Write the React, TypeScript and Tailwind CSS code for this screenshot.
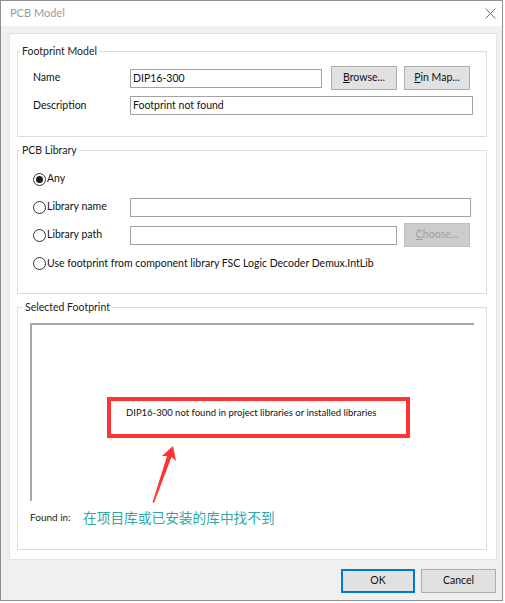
import React from "react";

const font = "font-['Lato','Noto_Sans','Liberation_Sans',sans-serif]";

const Radio = ({ checked }: { checked?: boolean }) => (
  <span className="w-[13px] h-[13px] rounded-full border border-[#333] bg-white flex items-center justify-center shrink-0">
    {checked && <span className="w-[7px] h-[7px] rounded-full bg-[#1a1a1a]" />}
  </span>
);

const Input = ({ value, className }: { value?: string; className: string }) => (
  <div
    className={
      "h-[19px] border border-[#a3a3a3] bg-white px-[2px] text-[10.5px] leading-[17px] text-[#111] " +
      className
    }
  >
    {value}
  </div>
);

const Button = ({
  children,
  disabled,
  primary,
  className,
}: {
  children: React.ReactNode;
  disabled?: boolean;
  primary?: boolean;
  className: string;
}) => (
  <button
    className={
      "h-[24px] flex items-center justify-center text-[10.5px] border " +
      (disabled
        ? "bg-[#cccccc] border-[#bfbfbf] text-[#a0a0a0] "
        : primary
        ? "bg-[#e1e1e1] border-[#0078d7] border-2 text-[#111] "
        : "bg-[#e1e1e1] border-[#adadad] text-[#111] ") +
      className
    }
  >
    {children}
  </button>
);

const Group = ({
  title,
  children,
  className,
  legendClass,
}: {
  title: string;
  children: React.ReactNode;
  className?: string;
  legendClass?: string;
}) => (
  <fieldset className={"border border-[#dcdcdc] w-[470px] " + (className ?? "")}>
    <legend className={"px-[2px] text-[10.5px] leading-[16px] text-[#222] " + (legendClass ?? "ml-[2px]")}>
      {title}
    </legend>
    {children}
  </fieldset>
);

export default function App() {
  return (
    <div className={"relative w-[505px] h-[603px] bg-white " + font}>
      <div className="w-[503px] h-[601px] border border-[#8e8e8e] bg-[#f0f0f0] flex flex-col">
        {/* title bar */}
        <div className="h-[25px] bg-white flex items-center justify-between pl-[9px] pr-[6px]">
          <span className="text-[11px] text-[#9b9b9b]">PCB Model</span>
          <svg width="11" height="11" viewBox="0 0 11 11">
            <path d="M0.5 0.5 L10.5 10.5 M10.5 0.5 L0.5 10.5" stroke="#707070" strokeWidth="1" />
          </svg>
        </div>

        <div className="flex-1 flex flex-col pl-[8px] pt-[7px]">
          {/* white panel */}
          <div className="w-[488px] h-[527px] bg-white border border-[#e3e3e3] pl-[7px] pt-[9px]">
            <Group title="Footprint Model">
              <div className="pl-[15px] pt-[7px] pb-[21px] text-[10.5px] text-[#111]">
                <div className="flex items-center h-[24px]">
                  <span className="w-[97px]">Name</span>
                  <Input value="DIP16-300" className="w-[192px]" />
                  <Button className="w-[66px] ml-[9px]">
                    <span>
                      <span className="underline">B</span>rowse...
                    </span>
                  </Button>
                  <Button className="w-[66px] ml-[7px]">
                    <span>
                      <span className="underline">P</span>in Map...
                    </span>
                  </Button>
                </div>
                <div className="flex items-center mt-[6px]">
                  <span className="w-[97px]">Description</span>
                  <Input value="Footprint not found" className="w-[343px]" />
                </div>
              </div>
            </Group>

            <Group title="PCB Library" className="mt-[5px]">
              <div className="pl-[15px] pt-[7px] pb-[15px] text-[10.5px] text-[#111]">
                <div className="flex items-center h-[28px]">
                  <Radio checked />
                  <span className="ml-[1px]">Any</span>
                </div>
                <div className="flex items-center h-[28px]">
                  <div className="w-[97px] flex items-center">
                    <Radio />
                    <span className="ml-[1px]">Library name</span>
                  </div>
                  <Input className="w-[341px]" />
                </div>
                <div className="flex items-center h-[28px]">
                  <div className="w-[97px] flex items-center">
                    <Radio />
                    <span className="ml-[1px]">Library path</span>
                  </div>
                  <Input className="w-[267px]" />
                  <Button disabled className="w-[66px] ml-[7px]">
                    <span>
                      <span className="underline">C</span>hoose...
                    </span>
                  </Button>
                </div>
                <div className="flex items-center h-[29px]">
                  <Radio />
                  <span className="ml-[1px]">Use footprint from component library FSC Logic Decoder Demux.IntLib</span>
                </div>
              </div>
            </Group>

            <Group title="Selected Footprint" className="mt-[5px]" legendClass="ml-[5px]">
              <div className="pl-[12px] pt-[8px] pb-[22px]">
                <div className="w-[444px] h-[178px] border-l-2 border-t-2 border-[#a8a8a8] bg-white pl-[94px] pt-[80px]">
                  <div className="text-[9.5px] leading-[16px] text-[#111]">
                    DIP16-300 not found in project libraries or installed libraries
                  </div>
                </div>
                <div className="flex items-center h-[20px] mt-[6px]">
                  <span className="w-[53px] text-[10px] text-[#222]">Found in:</span>
                  <span className="text-[13.7px] text-[#33a6a6] font-['Noto_Sans_CJK_SC',sans-serif]">
                    在项目库或已安装的库中找不到
                  </span>
                </div>
              </div>
            </Group>
          </div>

          {/* buttons */}
          <div className="w-[487px] flex justify-end gap-[6px] mt-[9px]">
            <Button primary className="w-[74px]">OK</Button>
            <Button className="w-[75px]">Cancel</Button>
          </div>
        </div>
      </div>

      {/* annotation overlay */}
      <div className="absolute left-[107px] top-[397px] w-[303px] h-[41px] border-[4px] border-[#ff3333]" />
      <svg className="absolute left-0 top-0" width="505" height="603">
        <polygon points="173,446 176,461 171.5,457 154,503 152.5,502.5 167,456 162,456" fill="#ff3333" />
      </svg>
    </div>
  );
}
